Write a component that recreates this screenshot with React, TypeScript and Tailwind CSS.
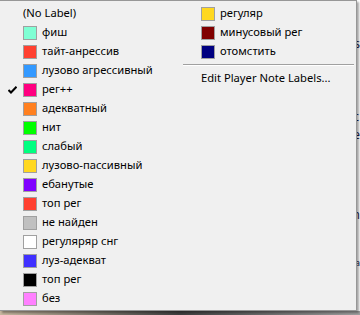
import { ReactNode } from "react";

type Label = { name: string; color: string };

const leftLabels: Label[] = [
  { name: "фиш", color: "#7fffd4" },
  { name: "тайт-анрессив", color: "#ff4030" },
  { name: "лузово агрессивный", color: "#3399ff" },
  { name: "рег++", color: "#ff0080" },
  { name: "адекватный", color: "#ff8020" },
  { name: "нит", color: "#00ff00" },
  { name: "слабый", color: "#00ff80" },
  { name: "лузово-пассивный", color: "#ffd820" },
  { name: "ебанутые", color: "#8000ff" },
  { name: "топ рег", color: "#ff4030" },
  { name: "не найден", color: "#c0c0c0" },
  { name: "регуляряр снг", color: "#ffffff" },
  { name: "луз-адекват", color: "#4030ff" },
  { name: "топ рег", color: "#000000" },
  { name: "без", color: "#ff80ff" },
];

const rightLabels: Label[] = [
  { name: "регуляр", color: "#ffd820" },
  { name: "минусовый рег", color: "#800000" },
  { name: "отомстить", color: "#000080" },
];

const Check = () => (
  <svg width="9" height="8" viewBox="0 0 9 8" className="absolute left-[8px] top-[6px]">
    <path d="M0.5 4 L3 6.5 L8.5 0.8" fill="none" stroke="#000" strokeWidth="2" />
  </svg>
);

const Row = ({ children, checked }: { children: ReactNode; checked?: boolean }) => (
  <div className="relative flex h-[19px] items-center">
    {checked && <Check />}
    {children}
  </div>
);

const LabelRow = ({ label, indent, checked }: { label: Label; indent: string; checked?: boolean }) => (
  <Row checked={checked}>
    <span
      className={`${indent} h-[14px] w-[14px] shrink-0 border border-[#a0a0a0]`}
      style={{ backgroundColor: label.color }}
    />
    <span className="ml-[5px] whitespace-nowrap">{label.name}</span>
  </Row>
);

export default function App() {
  return (
    <div className="relative h-[315px] w-[360px] overflow-hidden bg-white font-['Segoe_UI','Noto_Sans',sans-serif] text-[11.2px] text-black">
      {/* window behind the menu */}
      <div className="absolute right-0 top-[34px] text-[12px] leading-[19px] text-[#1a1a4a]">
        <div>s</div>
        <div>l</div>
      </div>
      <div className="absolute right-0 top-[108px] text-[12px] leading-[18px] text-[#1a1a4a]">
        <div>c</div>
        <div>e</div>
      </div>
      <div className="absolute right-0 top-[206px] text-[12px] text-[#1a1a4a]">n</div>
      <div className="absolute right-0 top-[258px] text-[9px] leading-[9px] text-[#1a1a4a]">a</div>
      <div className="absolute bottom-0 left-0 h-[4px] w-full bg-gradient-to-r from-[#c8b8a0] via-[#404040] to-[#a0a0a0]" />

      {/* popup menu */}
      <div className="relative flex h-[311px] w-[357px] border border-l-0 border-[#979797] bg-[#f0f0f0] pt-[3px] shadow-[2px_2px_2px_rgba(0,0,0,0.35)]">
        <div className="w-[183px]">
          <Row>
            <span className="ml-[23px]">(No Label)</span>
          </Row>
          {leftLabels.map((l, i) => (
            <LabelRow key={i} label={l} indent="ml-[23px]" checked={l.name === "рег++"} />
          ))}
        </div>
        <div className="flex-1">
          {rightLabels.map((l, i) => (
            <LabelRow key={i} label={l} indent="ml-[18px]" />
          ))}
          <div className="flex h-[8px] items-center pr-[2px]">
            <div className="h-[2px] w-full border-t border-[#a0a0a0] border-b border-b-white" />
          </div>
          <Row>
            <span className="ml-[18px] whitespace-nowrap">Edit Player Note Labels...</span>
          </Row>
        </div>
      </div>
    </div>
  );
}
